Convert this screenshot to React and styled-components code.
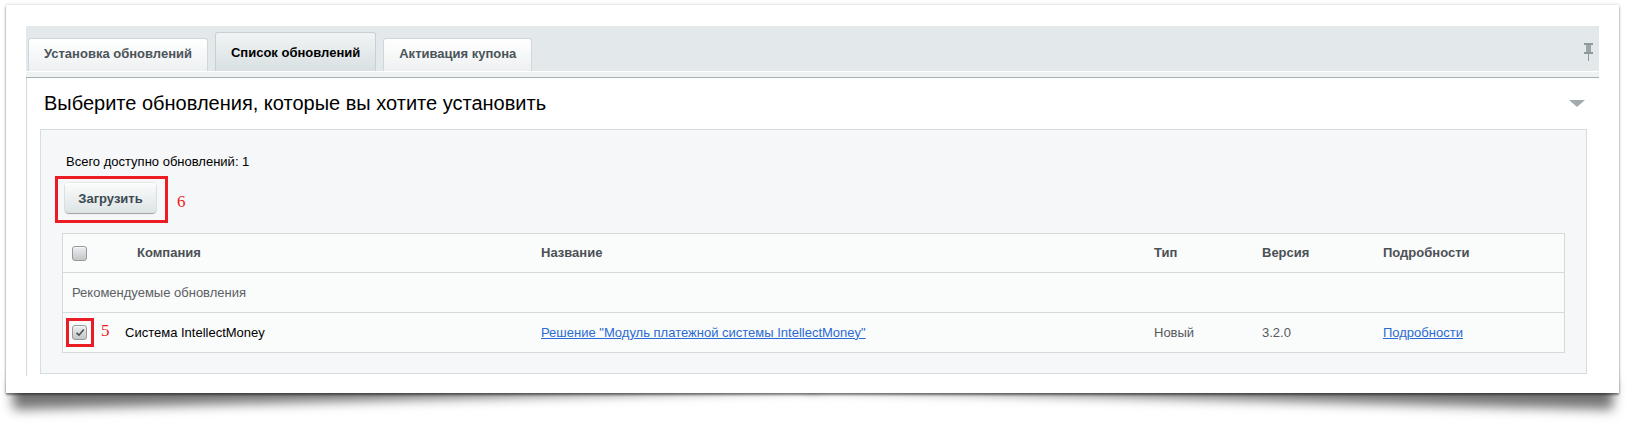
import styled, { createGlobalStyle } from "styled-components";

const GlobalStyle = createGlobalStyle`
  html, body {
    margin: 0;
    padding: 0;
    background: #fff;
  }
  body {
    font-family: "Liberation Sans", Arial, sans-serif;
    font-size: 13px;
    color: #000;
  }
  * {
    box-sizing: border-box;
  }
`;

const Page = styled.div`
  position: relative;
  z-index: 0;
  padding: 5px 0 40px 6px;
`;

const Sheet = styled.div`
  position: relative;
  width: 1613px;
  background: #fff;
  padding: 21px 20px 17px;
  box-shadow: 0 0 3px rgba(0, 0, 0, 0.22), 0 2px 2px rgba(0, 0, 0, 0.4);
  &::before,
  &::after {
    content: "";
    position: absolute;
    bottom: 20px;
    width: 50%;
    height: 30px;
    z-index: -1;
    box-shadow: 0 26px 12px rgba(0, 0, 0, 0.55);
  }
  &::before {
    left: 6px;
    transform: rotate(-1.5deg);
  }
  &::after {
    right: 6px;
    transform: rotate(1.5deg);
  }
`;

const TabBar = styled.div`
  height: 45px;
  background: #e3e9eb;
  display: flex;
  align-items: flex-end;
  padding: 0 6px 0 2px;
`;

const Tabs = styled.div`
  flex: 1;
  display: flex;
  align-items: flex-end;
  gap: 7px;
`;

const Tab = styled.div`
  height: ${(p) => (p.$active ? 39 : 33)}px;
  padding: ${(p) => (p.$active ? 12 : 7)}px 15px 0;
  font-size: 13px;
  font-weight: bold;
  line-height: 16px;
  color: ${(p) => (p.$active ? "#000" : "#4b5459")};
  border: 1px solid ${(p) => (p.$active ? "#c7d0d3" : "#d0d7da")};
  border-bottom: none;
  border-radius: 3px 3px 0 0;
  background: ${(p) =>
    p.$active
      ? "linear-gradient(#f1f4f5, #d8e0e2)"
      : "linear-gradient(#ffffff, #edf0f1)"};
  white-space: nowrap;
`;

const Pin = styled.svg`
  align-self: center;
  margin-top: 6px;
`;

const TabStrip = styled.div`
  height: 7px;
  border-top: 1px solid #fff;
  background: #eef2f3;
  border-bottom: 1px solid #a6afb2;
`;

const Content = styled.div`
  border-left: 1px solid #d3dadd;
  padding: 0 12px 2px 13px;
`;

const TitleRow = styled.div`
  height: 51px;
  display: flex;
  justify-content: space-between;
  align-items: flex-start;
  padding: 13px 2px 0 4px;
`;

const Title = styled.h2`
  margin: 0;
  font-size: 20px;
  font-weight: normal;
  line-height: 24px;
  color: #000;
`;

const Caret = styled.svg`
  margin-top: 9px;
`;

const Panel = styled.div`
  background: #f5f7f8;
  border: 1px solid #d5dde0;
  padding: 24px 21px 20px;
`;

const Info = styled.div`
  padding-left: 4px;
  line-height: 16px;
  color: #000;
`;

const ButtonRow = styled.div`
  display: flex;
  align-items: center;
  margin-top: 13px;
  padding-left: 3px;
`;

const Marked = styled.span`
  position: relative;
  display: inline-flex;
`;

const Frame = styled.span`
  position: absolute;
  inset: ${(p) => p.$inset};
  border: 3px solid #ec1c24;
  pointer-events: none;
`;

const Note = styled.span`
  font-family: "Liberation Serif", "Times New Roman", serif;
  font-size: 17px;
  line-height: 1;
  color: #ec1c24;
  margin-left: ${(p) => p.$left}px;
  margin-top: ${(p) => p.$top}px;
`;

const Button = styled.button`
  width: 91px;
  height: 30px;
  padding: 0;
  font-family: inherit;
  font-size: 13px;
  font-weight: bold;
  color: #3d4a52;
  border: none;
  border-radius: 4px;
  background: linear-gradient(#fbfcfc, #dde3e5);
  box-shadow: 0 1px 1px rgba(0, 0, 0, 0.3), 0 0 0 1px rgba(0, 0, 0, 0.07),
    inset 0 1px 0 #fff;
`;

const Table = styled.div`
  margin-top: 20px;
  border: 1px solid #d3dadc;
  background: #fafbfb;
`;

const Row = styled.div`
  display: grid;
  grid-template-columns: 62px 416px 613px 108px 121px 1fr;
  align-items: center;
  height: ${(p) => p.$h}px;
  & + & {
    border-top: 1px solid #d3dadc;
  }
`;

const Cell = styled.div`
  display: flex;
  align-items: center;
  padding-left: ${(p) => p.$pad || 0}px;
  font-weight: ${(p) => (p.$head ? "bold" : "normal")};
  color: ${(p) => p.$color || (p.$head ? "#4b5055" : "#555a5e")};
  line-height: 16px;
  white-space: nowrap;
`;

const GroupCell = styled.div`
  grid-column: 1 / -1;
  padding-left: 9px;
  color: #5b6064;
  line-height: 16px;
`;

const Link = styled.a`
  color: #2a6ad3;
  text-decoration: underline;
  cursor: pointer;
`;

const Box = styled.span`
  width: 15px;
  height: 15px;
  border-radius: 3px;
  border: 1px solid #959a9d;
  background: linear-gradient(#eceeef, #c3c7c9);
  box-shadow: inset 0 1px 0 rgba(255, 255, 255, 0.6);
  display: inline-flex;
  align-items: center;
  justify-content: center;
`;

const Checkbox = ({ checked }) => (
  <Box>
    {checked && (
      <svg width="10" height="9" viewBox="0 0 10 9">
        <path d="M1.5 4.8 L4 7.2 L8.8 1.6" fill="none" stroke="#4e5154" strokeWidth="1.6" />
      </svg>
    )}
  </Box>
);

export default function App() {
  return (
    <>
      <GlobalStyle />
      <Page>
        <Sheet>
          <TabBar>
            <Tabs>
              <Tab>Установка обновлений</Tab>
              <Tab $active>Список обновлений</Tab>
              <Tab>Активация купона</Tab>
            </Tabs>
            <Pin width="9" height="18" viewBox="0 0 9 18">
              <rect x="0" y="0" width="9" height="2" fill="#8f999c" />
              <rect x="2" y="2" width="5" height="7" fill="#9ba4a7" />
              <rect x="0" y="9" width="9" height="2" fill="#8f999c" />
              <rect x="4" y="11" width="1" height="7" fill="#8f999c" />
            </Pin>
          </TabBar>
          <TabStrip />
          <Content>
            <TitleRow>
              <Title>Выберите обновления, которые вы хотите установить</Title>
              <Caret width="16" height="8" viewBox="0 0 16 8">
                <polygon points="0,0 16,0 8,7" fill="#a2abae" />
              </Caret>
            </TitleRow>
            <Panel>
              <Info>Всего доступно обновлений: 1</Info>
              <ButtonRow>
                <Marked>
                  <Button>Загрузить</Button>
                  <Frame $inset="-7px -12px -10px -10px" />
                </Marked>
                <Note $left={21} $top={6}>
                  6
                </Note>
              </ButtonRow>
              <Table>
                <Row $h={38}>
                  <Cell $pad={9}>
                    <Checkbox />
                  </Cell>
                  <Cell $head $pad={12}>
                    Компания
                  </Cell>
                  <Cell $head>Название</Cell>
                  <Cell $head>Тип</Cell>
                  <Cell $head>Версия</Cell>
                  <Cell $head>Подробности</Cell>
                </Row>
                <Row $h={40}>
                  <GroupCell>Рекомендуемые обновления</GroupCell>
                </Row>
                <Row $h={40}>
                  <Cell $pad={9}>
                    <Marked>
                      <Checkbox checked />
                      <Frame $inset="-7px -7px -7px -6px" />
                    </Marked>
                    <Note $left={14} $top={-4}>
                      5
                    </Note>
                  </Cell>
                  <Cell $color="#000">Система IntellectMoney</Cell>
                  <Cell>
                    <Link>Решение "Модуль платежной системы IntellectMoney"</Link>
                  </Cell>
                  <Cell>Новый</Cell>
                  <Cell>3.2.0</Cell>
                  <Cell>
                    <Link>Подробности</Link>
                  </Cell>
                </Row>
              </Table>
            </Panel>
          </Content>
        </Sheet>
      </Page>
    </>
  );
}
